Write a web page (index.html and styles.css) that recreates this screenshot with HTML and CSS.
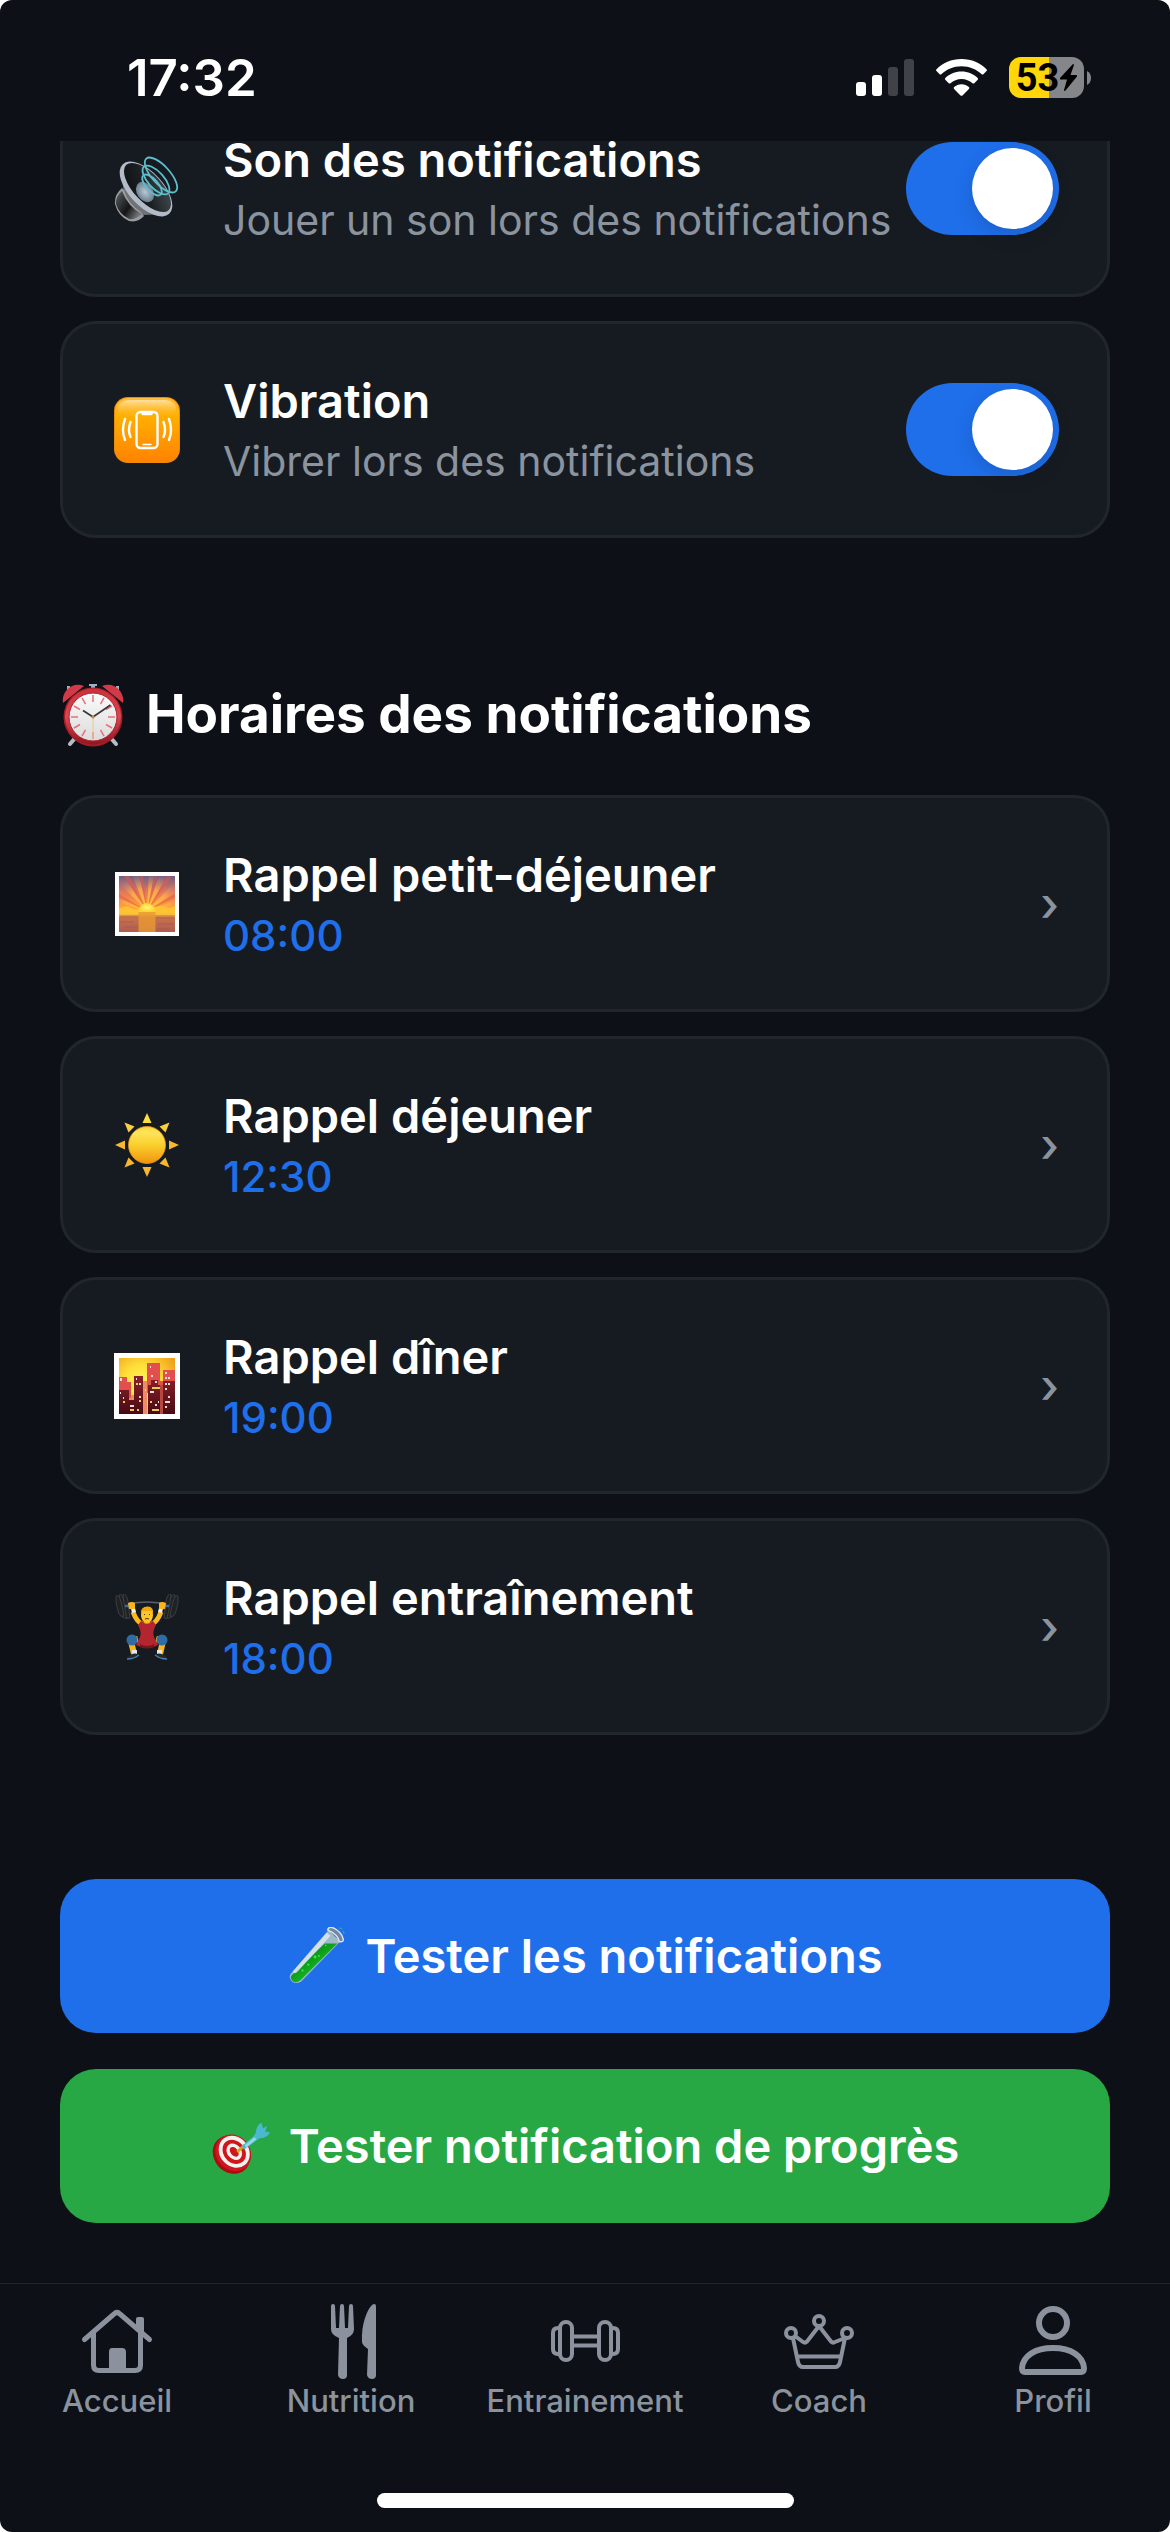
FILE: index.html
```html
<!DOCTYPE html>
<html lang="fr">
<head>
<meta charset="utf-8">
<meta name="viewport" content="width=device-width, initial-scale=1">
<title>Notifications</title>
<link rel="stylesheet" href="styles.css">
</head>
<body>
<div class="screen">
  <header class="status-bar">
    <time class="clock">17:32</time>
    <div class="indicators">
      <svg class="signal" viewBox="0 0 58 37" aria-hidden="true">
        <rect x="0" y="23" width="10" height="14" rx="3" fill="#fff"/>
        <rect x="16" y="16" width="10" height="21" rx="3" fill="#fff"/>
        <rect x="32" y="8" width="10" height="29" rx="3" fill="#3f4247"/>
        <rect x="48" y="0" width="10" height="37" rx="3" fill="#3f4247"/>
      </svg>
      <svg class="wifi" viewBox="0 0 51 37" fill="#fff" aria-hidden="true">
        <path d="M25.500 0C35.500 0 44.500 4 50.500 10.200Q51.400 11.200 50.500 12.100L47.400 15.200Q46.600 16 45.700 15.200C40.500 10.200 33.500 7.200 25.500 7.200S10.500 10.200 5.300 15.200Q4.400 16 3.600 15.200L.5 12.100Q-.4 11.200.5 10.200C6.500 4 15.500 0 25.500 0Z"/>
        <path d="M25.500 12.500C32 12.500 37.500 15 41.700 19Q42.500 19.900 41.700 20.800L38.300 24.200Q37.400 25 36.500 24.200C33.500 21.500 29.800 19.900 25.500 19.900S17.500 21.500 14.500 24.200Q13.600 25 12.700 24.200L9.300 20.800Q8.500 19.900 9.300 19C13.500 15 19 12.500 25.500 12.500Z"/>
        <path d="M25.500 25.300C28.400 25.300 31 26.400 32.900 28.100Q33.700 29 32.900 29.900L26.500 36.400Q25.500 37.300 24.500 36.400L18.100 29.900Q17.300 29 18.100 28.100C20 26.400 22.600 25.300 25.500 25.300Z"/>
      </svg>
      <div class="battery">
        <div class="battery-body">
          <span>53</span>
          <svg class="bolt" viewBox="0 0 17 27" aria-hidden="true"><path d="M13 0 0 14Q-.5 15.500 1 15.500H7L4 26Q4.200 27.500 5.500 26.500L17 12.500Q17.300 11 16 11H10.500L14 1Q14 0 13 0Z"/></svg>
        </div>
        <svg class="battery-tip" viewBox="0 0 4 14" aria-hidden="true"><path d="M0 0Q4 2 4 7T0 14Z" fill="#85868a"/></svg>
      </div>
    </div>
  </header>

  <main class="content">
    <section class="cards">
      <label class="card">
        <svg class="emoji" viewBox="0 0 66 66" aria-hidden="true">
          <defs>
            <linearGradient id="horn" x1="0" y1="0" x2="1" y2="1"><stop offset="0" stop-color="#0e1012"/><stop offset=".45" stop-color="#1b1f22"/><stop offset="1" stop-color="#4a5357"/></linearGradient>
            <linearGradient id="magnet" x1="0" y1="0" x2="1" y2=".7"><stop offset="0" stop-color="#6b6d70"/><stop offset=".25" stop-color="#3c4043"/><stop offset=".6" stop-color="#131517"/><stop offset="1" stop-color="#77797c"/></linearGradient>
            <radialGradient id="dome"><stop offset="0" stop-color="#b9c8d6"/><stop offset="1" stop-color="#6b7f8e"/></radialGradient>
          </defs>
          <path d="M9 29Q10 50 30 59L52 58 12 14Z" fill="#6f7174"/>
          <path d="M8 32Q0 39 1 48Q4 60 15 65Q24 67 30 60L27 56Q14 48 10 34Z" fill="#9a9c9f"/>
          <path d="M8 35Q1 41 2 48Q5 58 15 63Q22 64 28 58Q14 51 8 35Z" fill="url(#magnet)"/>
          <ellipse cx="32" cy="33" rx="17" ry="34" transform="rotate(-43 32 33)" fill="#b3bac8"/>
          <ellipse cx="33.500" cy="31.500" rx="14" ry="31" transform="rotate(-43 33.500 31.500)" fill="url(#horn)"/>
          <ellipse cx="31" cy="36" rx="8" ry="11" transform="rotate(-35 31 36)" fill="url(#dome)"/>
          <g fill="none" stroke="#5cc0cc" stroke-width="1.800">
            <ellipse cx="38" cy="29" rx="6" ry="13" transform="rotate(-42 38 29)"/>
            <ellipse cx="42" cy="24" rx="8" ry="18" transform="rotate(-42 42 24)"/>
            <ellipse cx="47" cy="19" rx="9" ry="22" transform="rotate(-42 47 19)"/>
          </g>
        </svg>
        <span class="card-text"><span class="card-title">Son des notifications</span><span class="card-note">Jouer un son lors des notifications</span></span>
        <input class="switch" type="checkbox" role="switch" checked>
      </label>

      <label class="card">
        <svg class="emoji" viewBox="0 0 66 66" aria-hidden="true">
          <defs>
            <linearGradient id="tile" x1="0" y1="0" x2="0" y2="1"><stop offset="0" stop-color="#ffbe3c"/><stop offset=".3" stop-color="#ffae00"/><stop offset="1" stop-color="#ff8300"/></linearGradient>
            <linearGradient id="gloss" x1="0" y1="0" x2="0" y2="1"><stop offset="0" stop-color="#ffe0a0"/><stop offset="1" stop-color="#ffb000" stop-opacity="0"/></linearGradient>
          </defs>
          <rect width="66" height="66" rx="14" fill="#ec8a08"/>
          <rect x="1" y="1" width="64" height="64" rx="13" fill="url(#tile)"/>
          <rect x="4" y="3" width="58" height="18" rx="11" fill="url(#gloss)"/>
          <g fill="none" stroke="#fff" stroke-width="2.400" stroke-linecap="round">
            <rect x="22.500" y="15" width="21" height="36" rx="4"/>
            <path d="M29 16.500H37" stroke-width="3.500"/><path d="M29 47.500H37" stroke-width="1.500"/>
            <path d="M16.500 25Q13.500 33 16.500 40M11 22Q7 33 11 43M49.500 25Q52.500 33 49.500 40M55 22Q59 33 55 43"/>
          </g>
        </svg>
        <span class="card-text"><span class="card-title">Vibration</span><span class="card-note">Vibrer lors des notifications</span></span>
        <input class="switch" type="checkbox" role="switch" checked>
      </label>
    </section>

    <section>
      <h2 class="section-title">
        <svg class="title-emoji" viewBox="0 0 62 64" aria-hidden="true">
          <defs>
            <linearGradient id="rim" x1="0" y1="0" x2="0" y2="1"><stop offset="0" stop-color="#c8303c"/><stop offset=".5" stop-color="#df4650"/><stop offset="1" stop-color="#8e1620"/></linearGradient>
            <linearGradient id="face" x1="0" y1="0" x2="0" y2="1"><stop offset="0" stop-color="#fafafa"/><stop offset="1" stop-color="#dcdcdc"/></linearGradient>
          </defs>
          <path d="M14 54 8 61M48 54 54 61" stroke="#b7bcc4" stroke-width="4" stroke-linecap="round"/>
          <path d="M27 1H35V3H33V8H29V3H27ZM5 3H8V7H5ZM54 3H57V7H54Z" fill="#9fb0c0"/>
          <path d="M1 20C-1 9 10-2 22 3Z" fill="#d23a48"/><path d="M61 20C63 9 52-2 40 3Z" fill="#d23a48"/>
          <circle cx="31" cy="34" r="29.500" fill="#a51c28"/><circle cx="31" cy="33.500" r="28" fill="url(#rim)"/>
          <circle cx="31" cy="34" r="24" fill="url(#face)" stroke="#a8222d" stroke-width="1"/>
          <g stroke="#e87078" stroke-width="1.500">
            <path d="M31 12V19M31 49V56M9 34H16M46 34H53"/>
            <path d="M31 12V19M31 49V56M9 34H16M46 34H53" transform="rotate(30 31 34)"/>
            <path d="M31 12V19M31 49V56M9 34H16M46 34H53" transform="rotate(60 31 34)"/>
          </g>
          <path d="M31 34V57" stroke="#e9c894"/>
          <path d="M21 27.500 31 34 48.500 22" fill="none" stroke="#383838" stroke-width="1.800"/>
          <circle cx="31" cy="34" r="1.500" fill="#b88b4a"/>
        </svg>
        Horaires des notifications
      </h2>
      <div class="cards">
        <button class="card" type="button">
          <svg class="emoji" viewBox="0 0 66 66" aria-hidden="true">
            <defs>
              <linearGradient id="dawn" x1="0" y1="0" x2="0" y2="1"><stop offset="0" stop-color="#6c5f86"/><stop offset=".28" stop-color="#e0785e"/><stop offset=".5" stop-color="#ff963c"/><stop offset=".64" stop-color="#ffb52c"/><stop offset=".69" stop-color="#e3a044"/><stop offset=".75" stop-color="#c8714b"/><stop offset="1" stop-color="#b05c50"/></linearGradient>
              <radialGradient id="riser"><stop offset="0" stop-color="#fff67a"/><stop offset="1" stop-color="#ffd22e"/></radialGradient>
              <radialGradient id="glow" gradientUnits="userSpaceOnUse" cx="33" cy="40" r="38"><stop offset="0" stop-color="#ffd23e"/><stop offset=".6" stop-color="#ffae48" stop-opacity=".8"/><stop offset="1" stop-color="#c08080" stop-opacity=".1"/></radialGradient>
              <clipPath id="dawn-clip"><rect x="5" y="5" width="56" height="56"/></clipPath>
            </defs>
            <rect x="1" y="1" width="64" height="64" fill="#fff"/>
            <rect x="5" y="5" width="56" height="56" fill="url(#dawn)"/>
            <g clip-path="url(#dawn-clip)">
              <path d="M33 40 0 30V25ZM33 40 5 12 10 6ZM33 40 18 4H25ZM33 40 35 0H41ZM33 40 46 2 53 5ZM33 40 60 12 66 18ZM33 40 66 28V33Z" fill="url(#glow)"/>
              <path d="M33 40 0 24V20ZM33 40 10 5 14 3ZM33 40 26 4 29 4ZM33 40 42 0H45ZM33 40 54 4 57 7ZM33 40 66 20V24Z" fill="#e8584c" opacity=".55"/>
              <path d="M5 38Q12 33 17 37T27 36H40Q48 34 52 36T61 35V44H5Z" fill="#ffce38" opacity=".65"/>
              <rect x="24.500" y="41" width="17" height="20" fill="#e89a32" opacity=".8"/>
              <path d="M24.500 41A8.500 9 0 0 1 41.500 41Z" fill="url(#riser)"/>
              <path d="M6 46H24M42 47H60M6 51H20M44 53H60M10 56H24M42 58H56" stroke="#98545a" opacity=".5"/>
            </g>
          </svg>
          <span class="card-text"><span class="card-title">Rappel petit-déjeuner</span><span class="card-time">08:00</span></span>
          <span class="chevron" aria-hidden="true">›</span>
        </button>

        <button class="card" type="button">
          <svg class="emoji" viewBox="0 0 66 66" aria-hidden="true">
            <defs>
              <linearGradient id="sun" x1="0" y1="0" x2="0" y2="1"><stop offset="0" stop-color="#fbd52c"/><stop offset=".15" stop-color="#ffe45c"/><stop offset=".5" stop-color="#f9cf2c"/><stop offset="1" stop-color="#f0930f"/></linearGradient>
            </defs>
            <g fill="#f9b72e">
              <path d="M33 1 37.500 11H28.500Z" fill="#fbe040"/><path d="M33 65 28.500 55H37.500Z"/>
              <path d="M1 33 11 28.500V37.500Z"/><path d="M65 33 55 28.500V37.500Z"/>
              <path d="M10.500 10.500 20.500 14.500 14.500 20.500Z" fill="#fbd040"/><path d="M55.500 10.500 45.500 14.500 51.500 20.500Z" fill="#fbd040"/>
              <path d="M10.500 55.500 14.500 45.500 20.500 51.500Z"/><path d="M55.500 55.500 51.500 45.500 45.500 51.500Z"/>
            </g>
            <circle cx="33" cy="33" r="18.500" fill="url(#sun)" stroke="#e89a18" stroke-width=".8"/>
          </svg>
          <span class="card-text"><span class="card-title">Rappel déjeuner</span><span class="card-time">12:30</span></span>
          <span class="chevron" aria-hidden="true">›</span>
        </button>

        <button class="card" type="button">
          <svg class="emoji" viewBox="0 0 66 66" aria-hidden="true">
            <defs>
              <radialGradient id="dusk" cx=".4" cy=".45" r=".7"><stop offset="0" stop-color="#fff45a"/><stop offset=".45" stop-color="#ffe03a"/><stop offset="1" stop-color="#f0a01c"/></radialGradient>
              <linearGradient id="tower" x1="0" y1="0" x2="0" y2="1"><stop offset="0" stop-color="#8a2228"/><stop offset="1" stop-color="#480a14"/></linearGradient>
            </defs>
            <rect width="66" height="66" fill="#fff"/>
            <rect x="5" y="5" width="56" height="56" fill="url(#dusk)"/>
            <path d="M24 28H33V61H14V42H24Z" fill="#f08a62"/>
            <path d="M5 24H13V29H17V45H5ZM33 10H46V28H49V17H61V40H33Z" fill="#e34f4c"/>
            <path d="M5 37H15V47H20V23H29V61H5ZM34 32H37V27H44V32H46V61H34ZM49 28H61V61H49Z" fill="url(#tower)"/>
            <path d="M46 32H49V61H46Z" fill="#b8483f"/>
            <path d="M6 25h2v3h-2ZM22 25h1v2h-1ZM25 30h2v2h-2ZM31 36h1v2h-1ZM36 13h1v2h-1ZM37 22h2v2h-2ZM51 19h2v2h-2ZM51 24h2v2h-2ZM54 24h2v2h-2ZM41 28h2v2h-2ZM36 38h4v2h-4ZM51 30h2v2h-2ZM54 30h2v2h-2ZM51 35h2v2h-2ZM54 43h2v2h-2ZM51 48h5v2h-5ZM51 53h2v2h-2ZM6 39h1v2h-1ZM9 44h1v2h-1ZM25 43h2v2h-2ZM16 52h4v2h-4ZM41 51h2v2h-2ZM44 48h1v2h-1Z" fill="#f8d8d8"/>
            <path d="M22 30h2v2h-2ZM38 34h8v2h-8ZM9 48h2v2h-2ZM25 47h2v2h-2ZM16 56h4v2h-4ZM23 56h2v2h-2ZM38 56h7v2h-7ZM36 48h2v2h-2Z" fill="#e8cc4a"/>
          </svg>
          <span class="card-text"><span class="card-title">Rappel dîner</span><span class="card-time">19:00</span></span>
          <span class="chevron" aria-hidden="true">›</span>
        </button>

        <button class="card" type="button">
          <svg class="emoji" viewBox="0 0 66 66" aria-hidden="true">
            <path d="M10 11Q33 5 56 11" fill="none" stroke="#5c6167" stroke-width="1.500"/>
            <g fill="#1f2123" stroke="#5a5d60" stroke-width=".5">
              <path d="M9 0Q13-1 14 8T16 24Q11 26 9 20Z"/><path d="M5 1Q9-1 10 8T13 24Q8 25 5 18Z"/><path d="M2 2Q5 0 7 8T10 22Q6 24 4 17Q1 8 2 2Z"/>
              <path d="M57 0Q53-1 52 8T50 24Q55 26 57 20Z"/><path d="M61 1Q57-1 56 8T53 24Q58 25 61 18Z"/><path d="M64 2Q61 0 59 8T56 22Q60 24 62 17Q65 8 64 2Z"/>
            </g>
            <path d="M11 12H16M50 12H55" stroke="#2f6eb0" stroke-width="2.500"/>
            <path d="M19 18Q23 29 30 31M47 18Q43 29 36 31" fill="none" stroke="#fbb91a" stroke-width="5"/>
            <path d="M17 14.500 21 14 22 18 18 19ZM49 14.500 45 14 44 18 48 19Z" fill="#eef1f4"/>
            <path d="M14 9Q18 7 21 9V15H15ZM52 9Q48 7 45 9V15H51Z" fill="#fbb51a"/>
            <path d="M24 45 17 47 20 60M42 45 49 47 46 60" fill="none" stroke="#f9b81c" stroke-width="6"/>
            <path d="M27 27Q33 31 39 27L42 31Q38 38 40 43L44 51Q33 57 22 51L26 43Q28 38 24 31Z" fill="#b32630"/>
            <path d="M26 50Q33 54 40 50V53Q33 56 26 53Z" fill="#7b151c"/>
            <circle cx="18" cy="46" r="5.500" fill="#2f6ca4"/><circle cx="48" cy="46" r="5.500" fill="#2f6ca4"/>
            <path d="M18 56H23V60H18ZM43 56H48V60H43Z" fill="#e5e8eb"/>
            <path d="M13 64Q18 58 24 60L23 64ZM53 64Q48 58 42 60L43 64Z" fill="#26282b"/>
            <path d="M13 65Q20 65 25 61M53 65Q46 65 41 61" fill="none" stroke="#4482b8" stroke-width="1.300"/>
            <path d="M30 26H36V29Q33 31 30 29Z" fill="#df9414"/>
            <ellipse cx="33" cy="21" rx="6" ry="8" fill="#ffc526"/>
            <path d="M27 20Q26 13 33 12.500T39 20L37 17H29Z" fill="#f5a80d"/>
            <path d="M30.500 20v1M35.500 20v1M31 25Q33 24 35 25" stroke="#5c3410" fill="none"/>
          </svg>
          <span class="card-text"><span class="card-title">Rappel entraînement</span><span class="card-time">18:00</span></span>
          <span class="chevron" aria-hidden="true">›</span>
        </button>
      </div>
    </section>

    <div class="actions">
      <button class="action action-blue" type="button">
        <svg class="action-emoji" viewBox="0 0 60 60" aria-hidden="true">
          <defs><linearGradient id="liquid" x1="0" y1="0" x2="1" y2="1"><stop offset=".2" stop-color="#087a16"/><stop offset=".6" stop-color="#10b81e"/><stop offset="1" stop-color="#20e838"/></linearGradient></defs>
          <path d="M42 3 54 15 14 56Q8 60 4 56T3 48Z" fill="#9fb9c8"/>
          <path d="M38 17H51L13 55Q8 59 4.500 55.500T5 49Z" fill="url(#liquid)"/>
          <path d="M40 6 44 9 9 47Q6 49 5 46Z" fill="#dbe6ee" opacity=".85"/>
          <path d="M41 3Q42-1 47 1Q55 5 57 12Q58 16 53 15Q52 8 41 3Z" fill="#6f87a5" stroke="#dde5ec" stroke-width="1.500"/>
          <g fill="#40e04c"><circle cx="28" cy="31" r="1.500"/><circle cx="32" cy="30" r="1"/><circle cx="21" cy="39" r="1.200"/><circle cx="15" cy="45" r="1.200"/><circle cx="39" cy="19" r="1"/></g>
          <path d="M53 1 56 2M57 4 58 7" stroke="#2ba79c" stroke-width="1.500"/>
        </svg>
        Tester les notifications
      </button>
      <button class="action action-green" type="button">
        <svg class="action-emoji" viewBox="0 0 60 60" aria-hidden="true">
          <ellipse cx="20" cy="39" rx="18" ry="21" transform="rotate(-40 20 39)" fill="#a80d14"/>
          <ellipse cx="22" cy="37" rx="17.500" ry="20" transform="rotate(-40 22 37)" fill="#cf161d"/>
          <ellipse cx="23" cy="36" rx="13" ry="15.500" transform="rotate(-40 23 36)" fill="none" stroke="#f5f1ee" stroke-width="4"/>
          <ellipse cx="23" cy="36" rx="5.500" ry="7.500" transform="rotate(-40 23 36)" fill="none" stroke="#f5f1ee" stroke-width="3.500"/>
          <path d="M26 36 34 29" stroke="#d9a310" stroke-width="3"/>
          <path d="M31 30 43 20 45 17Q46 8 51 6L53 12 57 9 55 15 60 16Q57 22 49 22L45 25 33 34Z" fill="#4cb8d0"/>
          <path d="M34 29 44 21 46 23 35 32Z" fill="#8edcea"/>
        </svg>
        Tester notification de progrès
      </button>
    </div>
  </main>

  <footer class="footer">
    <nav class="tabs">
      <a class="tab" href="#accueil">
        <svg class="tab-icon" viewBox="0 0 78 78" aria-hidden="true">
          <g fill="none" stroke="#8b929e" stroke-width="5" stroke-linecap="round" stroke-linejoin="round"><path d="M6.500 37.500 36 12Q39 9 42 12L71.500 37.500"/><path d="M15.500 31V63Q15.500 68.500 21 68.500H57Q62.500 68.500 62.500 63V31"/></g>
          <path d="M31 68V50Q31 46 34 46H44Q48 46 48 50V68ZM58 24V17Q58 15 60 15H64Q66 15 66 17V33Z" fill="#8b929e"/>
        </svg>
        Accueil
      </a>
      <a class="tab" href="#nutrition">
        <svg class="tab-icon" viewBox="0 0 78 78" fill="#8b929e" aria-hidden="true">
          <path d="M19 4Q19 2 21 2T23 4L24 26H27L28 4Q28 2 30 2T32 4L33 26H36L37 4Q37 2 39 2T41 4L42 27Q42 33 35 36L35 73Q35 77 31 77T26 73L27 36Q19 33 19 27Z"/>
          <path d="M64 5V73Q64 77 60 77T55 73L56 47Q50 43 50 40C49 22 55 8 60 3Q64 0 64 5Z"/>
        </svg>
        Nutrition
      </a>
      <a class="tab" href="#entrainement">
        <svg class="tab-icon" viewBox="0 0 78 78" fill="none" stroke="#8b929e" stroke-width="4" aria-hidden="true">
          <rect x="14" y="20" width="12" height="38" rx="6"/><rect x="53" y="20" width="12" height="38" rx="6"/>
          <path d="M28 34.500H51M28 43.500H51M14 26H12Q7 26 7 31V47Q7 52 12 52H14M65 26H67Q72 26 72 31V47Q72 52 67 52H65"/>
        </svg>
        Entrainement
      </a>
      <a class="tab" href="#coach">
        <svg class="tab-icon" viewBox="0 0 78 78" fill="none" stroke="#8b929e" stroke-width="4" stroke-linejoin="round" aria-hidden="true">
          <circle cx="39" cy="19" r="5"/><circle cx="11" cy="31" r="5"/><circle cx="67" cy="31" r="5"/>
          <path d="M13 36 18 60Q19 65 23 65H55Q59 65 60 60L65 36L55 40Q53 41.500 51 39.500L39 24L27 39.500Q25 41.500 23 40L15 34M18 54.500H60"/>
        </svg>
        Coach
      </a>
      <a class="tab" href="#profil">
        <svg class="tab-icon" viewBox="0 0 78 78" fill="none" stroke="#8b929e" stroke-width="6" aria-hidden="true">
          <circle cx="39" cy="21" r="14"/><path d="M11 70Q8 70 8 66C9 54 21 46 39 46S69 54 70 66Q70 70 67 70Z"/>
        </svg>
        Profil
      </a>
    </nav>
    <div class="home-indicator"></div>
  </footer>
</div>
</body>
</html>
```
FILE: styles.css
```css
* { box-sizing: border-box; }

body {
  margin: 0;
  background: #fff;
  font-family: Inter, "Liberation Sans", sans-serif;
}

button {
  margin: 0;
  border: 0;
  font: inherit;
  color: inherit;
  text-align: left;
}

.screen {
  display: flex;
  flex-direction: column;
  height: 100vh;
  overflow: hidden;
  border-radius: 12px;
  background: #0d1117;
  color: #fff;
}

/* Status bar */
.status-bar {
  display: flex;
  flex: none;
  align-items: center;
  justify-content: space-between;
  height: 141px;
  padding: 14px 79px 0 127px;
}

.clock {
  font-size: 51px;
  font-weight: 600;
  line-height: 60px;
}

.indicators { display: flex; align-items: center; gap: 22px; }
.signal { width: 58px; height: 37px; }
.wifi { width: 51px; height: 37px; }
.battery { display: flex; align-items: center; gap: 3px; }
.battery-tip { width: 4px; height: 14px; }
.bolt { width: 17px; height: 27px; }

.battery-body {
  display: flex;
  align-items: center;
  justify-content: center;
  gap: 1px;
  width: 75px;
  height: 41px;
  border-radius: 12px;
  background: linear-gradient(90deg, #ffd60a 53%, #85868a 53%);
  color: #000;
  font-family: Roboto, "Liberation Sans", sans-serif;
  font-size: 38px;
  font-weight: 700;
  line-height: 40px;
}

/* The list is scrolled to its end, so it rests on the tab bar. */
.content {
  display: flex;
  flex: 1;
  flex-direction: column;
  justify-content: flex-end;
  gap: 144px;
  min-height: 0;
  overflow: hidden;
  padding: 0 60px 60px;
}

.cards { display: flex; flex-direction: column; gap: 24px; }

.card {
  display: flex;
  align-items: center;
  gap: 40px;
  width: 100%;
  padding: 48px;
  border: 3px solid #21262d;
  border-radius: 36px;
  background: #161b22;
}

.emoji { flex: none; width: 72px; height: 66px; }

.card-text {
  display: flex;
  flex: 1;
  flex-direction: column;
  gap: 6px;
  min-width: 0;
  white-space: nowrap;
}

.card-title { font-size: 47px; font-weight: 600; line-height: 58px; }
.card-note, .card-time { line-height: 51px; }
.card-note { color: #8b949e; font-size: 41px; }
.card-time { color: #1f6feb; font-size: 42px; font-weight: 500; }

.chevron {
  color: #8b949e;
  font-size: 47px;
  font-weight: 500;
  line-height: 58px;
}

.switch {
  display: flex;
  flex: none;
  align-items: center;
  justify-content: flex-end;
  width: 153px;
  height: 93px;
  margin: 0 0 0 -40px;
  padding: 6px;
  border-radius: 47px;
  background: #1f6feb;
  appearance: none;
}

.switch::before {
  content: "";
  width: 81px;
  height: 81px;
  border-radius: 50%;
  background: #fff;
  box-shadow: 0 6px 20px rgba(0, 0, 0, 0.15);
}

.switch:not(:checked) { justify-content: flex-start; background: #30363d; }

.section-title {
  display: flex;
  align-items: center;
  gap: 20px;
  margin: 0 0 48px;
  font-size: 53px;
  font-weight: 700;
  line-height: 65px;
  white-space: nowrap;
}

.title-emoji { width: 66px; height: 64px; }

/* Test buttons */
.actions { display: flex; flex-direction: column; gap: 36px; }

.action {
  display: flex;
  align-items: center;
  justify-content: center;
  gap: 18px;
  padding: 48px;
  border-radius: 36px;
  font-size: 47px;
  font-weight: 600;
  line-height: 58px;
  white-space: nowrap;
}

.action-emoji { width: 60px; height: 58px; }
.action-blue { background: #1f6feb; }
.action-green { background: #28a745; }

/* Tab bar */
.footer {
  display: flex;
  flex: none;
  flex-direction: column;
  align-items: center;
  gap: 74px;
  padding: 18px 0 24px;
  border-top: 1px solid #21262d;
}

.tabs { display: flex; width: 100%; }

.tab {
  display: flex;
  flex: 1 1 0;
  flex-direction: column;
  align-items: center;
  gap: 3px;
  color: #8b949e;
  font-size: 31px;
  font-weight: 500;
  line-height: 36px;
  text-decoration: none;
}

.tab-icon { width: 78px; height: 78px; }

.home-indicator {
  width: 417px;
  height: 15px;
  border-radius: 8px;
  background: #fff;
}
```
